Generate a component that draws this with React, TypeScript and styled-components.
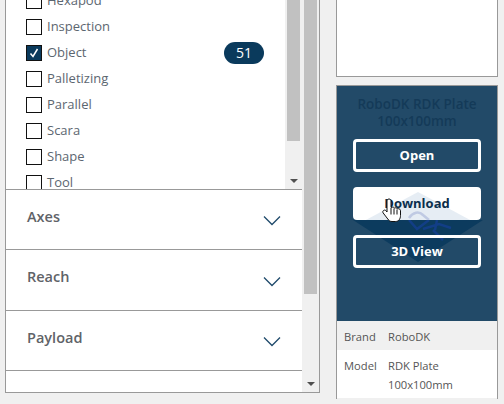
import { createGlobalStyle, styled } from "styled-components";

const GlobalStyle = createGlobalStyle`
  html, body {
    margin: 0;
    padding: 0;
    background: #f0f0f0;
    font-family: "Open Sans", "Liberation Sans", sans-serif;
    overflow: hidden;
  }
`

const categories = ["Hexapod", "Inspection", "Object", "Palletizing", "Parallel", "Scara", "Shape", "Tool"];
const sections = ["Axes", "Reach", "Payload", "Weight"];

function Scrollbar({ thumb }: { thumb: number }) {
    return (
        <Track>
            <Thumb $height={thumb} />
            <Arrow />
        </Track>
    )
}

function Chevron() {
    return (
        <svg width="18" height="11" viewBox="0 0 18 11" fill="none">
            <path d="M1 1.5 L9 9.5 L17 1.5" stroke="#1f4a6b" strokeWidth="1.3" />
        </svg>
    )
}

function Hand() {
    return (
        <Cursor width="21" height="25" viewBox="0 0 21 25">
            <path
                d="M7 1c1.2 0 2 .9 2 2v6.400l1.600-.2c.8-.1 1.400.2 1.800.8l1.200-.2c.8 0 1.400.4 1.700 1l1-.1c1.300 0 2.200.9 2.200 2.100v4.700c0 3.500-1.900 6-5 6h-3.500c-2 0-3.200-1-4.200-2.500L1.200 15c-.7-1-.4-2 .4-2.600.8-.5 1.800-.3 2.300.3L5 14V3c0-1.100.9-2 2-2z"
                fill="#fff"
                stroke="#111"
                strokeWidth="1"
            />
            <path d="M9 10v6.500M12 10.500v6M15 11.500v5" stroke="#111" strokeWidth="1" fill="none" />
        </Cursor>
    )
}

// the plate picture shows through: pale over the white button, dark on the card
function PlateOnButton() {
    return (
        <PlateTop width="134" height="28" viewBox="0 0 134 28">
            <path d="M67 0 L134 36 L0 36 Z" fill="#1a5a9c" opacity="0.11" />
            <path d="M58 26 C62 20 68 19 72 23 L78 28" stroke="#2a3fa0" strokeWidth="2.500" fill="none" opacity="0.2" />
        </PlateTop>
    )
}

function PlateOnCard() {
    return (
        <PlateBottom width="134" height="44" viewBox="0 0 134 44">
            <path d="M2 0 H132 L67 42 Z" fill="#0c3b5e" />
            <path d="M58 0 L66 9 L78 0 M86 0 L84 10 M72 9 L88 4 L100 8 M82 10 L92 20" stroke="#123e86" strokeWidth="2.500" fill="none" />
        </PlateBottom>
    )
}

export default function App() {
    return (
        <Page>
            <GlobalStyle />
            <FilterPanel>
                <FilterContent>
                    <ListSection>
                        <List>
                            {categories.map((name) => (
                                <Row key={name}>
                                    <Checkbox $checked={name === "Object"}>
                                        {name === "Object" && (
                                            <svg width="14" height="14" viewBox="0 0 14 14" fill="none">
                                                <path d="M3.500 7.500 L6 10.500 L10.500 3" stroke="#fff" strokeWidth="1.500" />
                                            </svg>
                                        )}
                                    </Checkbox>
                                    <RowLabel>{name}</RowLabel>
                                    {name === "Object" && <Badge>51</Badge>}
                                </Row>
                            ))}
                        </List>
                        <Scrollbar thumb={141} />
                    </ListSection>
                    {sections.map((name) => (
                        <Section key={name} $height={name === "Reach" ? 61 : 60}>
                            <SectionTitle>{name}</SectionTitle>
                            <Chevron />
                        </Section>
                    ))}
                </FilterContent>
                <Scrollbar thumb={294} />
            </FilterPanel>
            <Side>
                <PreviewCard />
                <ProductCard>
                    <Overlay>
                        <ProductTitle>RoboDK RDK Plate<br />100x100mm</ProductTitle>
                        <ActionButton>Open</ActionButton>
                        <ActionButton $hover>Download</ActionButton>
                        <ActionButton>3D View</ActionButton>
                        <PlateOnCard />
                        <PlateOnButton />
                        <Hand />
                    </Overlay>
                    <SpecRow $shaded>
                        <SpecName>Brand</SpecName>
                        <SpecValue>RoboDK</SpecValue>
                    </SpecRow>
                    <SpecRow>
                        <SpecName>Model</SpecName>
                        <SpecValue>RDK Plate<br />100x100mm</SpecValue>
                    </SpecRow>
                </ProductCard>
            </Side>
        </Page>
    )
}

const Page = styled.div`
  width: 504px;
  height: 404px;
  box-sizing: border-box;
  padding-left: 5px;
  display: flex;
  align-items: flex-start;
  gap: 16px;
  background: #f0f0f0;
  overflow: hidden;
`

const FilterPanel = styled.div`
  width: 315px;
  height: 393px;
  box-sizing: border-box;
  display: flex;
  background: #fff;
  border: 1px solid #999;
  border-top: none;
`

const FilterContent = styled.div`
  width: 296px;
  height: 100%;
  overflow: hidden;
`

const Track = styled.div`
  position: relative;
  width: 17px;
  flex-shrink: 0;
  box-sizing: border-box;
  padding: 0 2px;
  background: #f0f0f0;
`

const Thumb = styled.div<{ $height: number }>`
  height: ${(props) => props.$height}px;
  background: #c1c1c1;
`

const Arrow = styled.div`
  position: absolute;
  left: 5px;
  bottom: 6px;
  width: 0;
  height: 0;
  border-left: 4px solid transparent;
  border-right: 4px solid transparent;
  border-top: 4px solid #505050;
`

const ListSection = styled.div`
  height: 190px;
  box-sizing: border-box;
  display: flex;
  border-bottom: 1px solid #999;
`

const List = styled.div`
  flex: 1;
  height: 189px;
  padding: 0 21px 0 20px;
  overflow: hidden;
  &::before {
    content: "";
    display: block;
    margin-top: -12px;
  }
`

const Row = styled.div`
  height: 26px;
  display: flex;
  align-items: center;
`

const Checkbox = styled.span<{ $checked?: boolean }>`
  width: 16px;
  height: 16px;
  box-sizing: border-box;
  display: flex;
  align-items: center;
  justify-content: center;
  border: 1px solid #111;
  background: ${(props) => (props.$checked ? "#0a3a5c" : "#fff")};
`

const RowLabel = styled.span`
  flex: 1;
  margin: -2px 0 0 5px;
  font-size: 13px;
  color: #5c6670;
`

const Badge = styled.span`
  width: 40px;
  height: 22px;
  margin-top: -1px;
  border-radius: 11px;
  display: flex;
  align-items: center;
  justify-content: center;
  background: #0a3a5c;
  color: #fff;
  font-size: 14px;
`

const Section = styled.div<{ $height: number }>`
  height: ${(props) => props.$height}px;
  box-sizing: border-box;
  display: flex;
  align-items: center;
  justify-content: space-between;
  padding: 0 21px;
  border-bottom: 1px solid #999;
  svg {
    margin-top: 2px;
  }
`

const SectionTitle = styled.span`
  font-size: 14.5px;
  font-weight: 600;
  color: #5f6368;
  margin-top: -7px;
`

const Side = styled.div`
  width: 162px;
  display: flex;
  flex-direction: column;
  gap: 8px;
`

const PreviewCard = styled.div`
  height: 77px;
  box-sizing: border-box;
  background: #fff;
  border: 1px solid #999;
  border-top: none;
`

const ProductCard = styled.div`
  box-sizing: border-box;
  height: 314px;
  border: 1px solid #999;
  border-bottom: none;
  background: #f0f0f0;
`

const Overlay = styled.div`
  position: relative;
  height: 235px;
  box-sizing: border-box;
  padding: 10px 16px 0;
  background: #224a68;
  display: flex;
  flex-direction: column;
  gap: 15px;
`

const ProductTitle = styled.div`
  height: 43px;
  margin-bottom: -15px;
  font-size: 13.5px;
  line-height: 17px;
  font-weight: 600;
  text-align: center;
  color: #143a58;
`

const ActionButton = styled.button<{ $hover?: boolean }>`
  position: relative;
  z-index: 1;
  height: 33px;
  padding: 0 0 2px;
  box-sizing: border-box;
  border: 3px solid #fff;
  border-radius: 4px;
  background: ${(props) => (props.$hover ? "#fff" : "transparent")};
  color: ${(props) => (props.$hover ? "#0a2a45" : "#fff")};
  font-family: inherit;
  font-size: 13px;
  font-weight: 700;
`

const PlateTop = styled.svg`
  position: absolute;
  z-index: 2;
  left: 14px;
  top: 106px;
  pointer-events: none;
`

const PlateBottom = styled.svg`
  position: absolute;
  z-index: 0;
  left: 14px;
  top: 134px;
  pointer-events: none;
`

const Cursor = styled.svg`
  position: absolute;
  z-index: 3;
  left: 45px;
  top: 112px;
  pointer-events: none;
`

const SpecRow = styled.div<{ $shaded?: boolean }>`
  display: flex;
  padding: 6px 7px 4px;
  font-size: 11.2px;
  line-height: 19px;
  color: #555;
  background: ${(props) => (props.$shaded ? "#f0f0f0" : "#fff")};
`

const SpecName = styled.span`
  width: 44px;
`

const SpecValue = styled.span`
  flex: 1;
`
